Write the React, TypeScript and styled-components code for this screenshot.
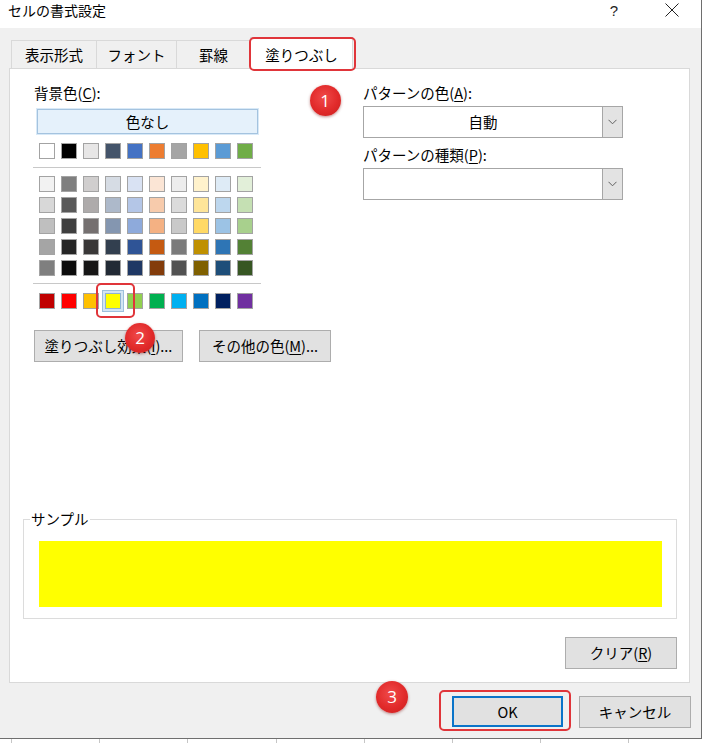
import React from 'react';
import styled, { createGlobalStyle } from 'styled-components';

const FONT = `"Noto Sans CJK JP", "Noto Sans", sans-serif`;

const GlobalStyle = createGlobalStyle`
  html, body { margin: 0; padding: 0; background: #fff; }
  body { font-family: ${FONT}; color: #000; }
  * { box-sizing: border-box; }
`;

const Page = styled.div`
  width: 703px;
  height: 743px;
  overflow: hidden;
  background: #fff;
  display: flex;
  flex-direction: column;
`;

const Window = styled.div`
  position: relative;
  width: 702px;
  height: 739px;
  flex: none;
  border-right: 1px solid #6e6e6e;
  border-bottom: 1px solid #6e6e6e;
  background: #f0f0f0;
  display: flex;
  flex-direction: column;
`;

const TitleBar = styled.div`
  height: 28px;
  flex: none;
  background: #fff;
  display: flex;
  align-items: flex-start;
`;

const Title = styled.div`
  flex: 1;
  padding: 0 0 0 8px;
  font-size: 14px;
  line-height: 20px;
`;

const CaptionButton = styled.div`
  width: 58px;
  height: 20px;
  display: flex;
  align-items: center;
  justify-content: center;
  font-family: "Liberation Sans", sans-serif;
  font-size: 15px;
  color: #222;
`;

const Body = styled.div`
  flex: 1;
  display: flex;
  flex-direction: column;
  padding: 8px 11px 0 9px;
`;

const TabRow = styled.div`
  height: 32px;
  flex: none;
  display: flex;
  align-items: flex-end;
  padding-left: 2px;
`;

const Tab = styled.div<{ $w: number; $active?: boolean }>`
  position: relative;
  width: ${(p) => p.$w}px;
  height: ${(p) => (p.$active ? 32 : 28)}px;
  margin-right: -1px;
  margin-bottom: ${(p) => (p.$active ? -1 : 0)}px;
  z-index: ${(p) => (p.$active ? 2 : 1)};
  padding-top: ${(p) => (p.$active ? 7 : 4)}px;
  background: ${(p) => (p.$active ? '#fff' : '#f0f0f0')};
  border: 1px solid #d9d9d9;
  border-bottom: none;
  text-align: center;
  font-size: 14.5px;
  line-height: 20px;
`;

const RedFrame = styled.div<{ $t: number; $l: number; $r: number; $b: number }>`
  position: absolute;
  top: ${(p) => p.$t}px;
  left: ${(p) => p.$l}px;
  right: ${(p) => p.$r}px;
  bottom: ${(p) => p.$b}px;
  border: 2px solid #e0353a;
  border-radius: 5px;
  pointer-events: none;
  z-index: 5;
`;

const Panel = styled.div`
  flex: 1;
  background: #fff;
  border: 1px solid #d9d9d9;
  display: flex;
  flex-direction: column;
  padding: 14px 12px 13px 13px;
`;

const Columns = styled.div`
  display: grid;
  grid-template-columns: 329px 260px;
  padding-left: 11px;
`;

const Column = styled.div`
  display: flex;
  flex-direction: column;
  align-items: flex-start;
`;

const Label = styled.div<{ $mt?: number }>`
  font-size: 14.5px;
  line-height: 20px;
  margin-top: ${(p) => p.$mt ?? 0}px;
`;

const NoColorButton = styled.div`
  margin: 6px 0 0 3px;
  width: 221px;
  height: 25px;
  background: #e5f1fb;
  border: 1px solid #a4c3df;
  outline: 1px solid #d8e9f7;
  display: flex;
  align-items: center;
  justify-content: center;
  font-size: 14.5px;
  line-height: 20px;
`;

const SwatchGrid = styled.div<{ $mt: number }>`
  display: grid;
  grid-template-columns: repeat(10, 16px);
  grid-auto-rows: 16px;
  column-gap: 6px;
  row-gap: 5px;
  margin: ${(p) => p.$mt}px 0 0 5px;
`;

const Swatch = styled.div<{ $c: string; $sel?: boolean }>`
  position: relative;
  width: 16px;
  height: 16px;
  background: ${(p) => p.$c};
  border: 1px solid ${(p) => (p.$sel ? '#8fb3d3' : '#a3a3a3')};
  box-shadow: ${(p) => (p.$sel ? '0 0 0 2px #d3e5f4, 0 0 0 3px #9dbfdc' : 'none')};
`;

const Separator = styled.div<{ $mt: number }>`
  width: 228px;
  height: 1px;
  margin: ${(p) => p.$mt}px 0 0 -1px;
  background: #c8c8c8;
`;

const ButtonRow = styled.div`
  display: flex;
  gap: 16px;
  margin-top: 21px;
`;

const PushButton = styled.div<{ $w: number; $default?: boolean }>`
  position: relative;
  width: ${(p) => p.$w}px;
  height: ${(p) => (p.$default ? 31 : 32)}px;
  background: #e1e1e1;
  border: ${(p) => (p.$default ? '2px solid #0a74c9' : '1px solid #adadad')};
  display: flex;
  align-items: center;
  justify-content: center;
  font-size: 14.5px;
  line-height: 20px;
  flex: none;
`;

const Select = styled.div`
  margin-top: 3px;
  width: 260px;
  height: 32px;
  border: 1px solid #a6a6a6;
  background: #fff;
  display: flex;
`;

const SelectValue = styled.div`
  flex: 1;
  display: flex;
  align-items: center;
  justify-content: center;
  font-size: 14.5px;
  line-height: 20px;
`;

const SelectArrow = styled.div`
  width: 20px;
  background: #e3e3e3;
  border-left: 1px solid #a6a6a6;
  display: flex;
  align-items: center;
  justify-content: center;
`;

const SampleBox = styled.div`
  position: relative;
  margin-top: auto;
  height: 100px;
  border: 1px solid #dcdcdc;
  padding: 21px 14px 11px 15px;
`;

const SampleCaption = styled.div`
  position: absolute;
  top: -11px;
  left: 6px;
  padding: 0 1px;
  background: #fff;
  font-size: 14.5px;
  line-height: 20px;
`;

const SampleFill = styled.div<{ $c: string }>`
  height: 66px;
  background: ${(p) => p.$c};
`;

const ClearRow = styled.div`
  display: flex;
  justify-content: flex-end;
  margin-top: 18px;
`;

const Footer = styled.div`
  height: 55px;
  flex: none;
  display: flex;
  justify-content: flex-end;
  align-items: flex-start;
  gap: 16px;
  padding-top: 13px;
  margin-right: -1px;
`;

const Badge = styled.div<{ $x: number; $y: number; $d: number }>`
  position: absolute;
  left: ${(p) => p.$x - p.$d / 2}px;
  top: ${(p) => p.$y - p.$d / 2}px;
  width: ${(p) => p.$d}px;
  height: ${(p) => p.$d}px;
  border-radius: 50%;
  background: radial-gradient(circle at 45% 40%, #f04a4a 0%, #e12a2a 55%, #c81e1e 100%);
  box-shadow: 0 1px 3px rgba(120, 0, 0, 0.45);
  color: #fff;
  font-family: "Open Sans", "Liberation Sans", sans-serif;
  font-size: 17px;
  line-height: ${(p) => p.$d}px;
  text-align: center;
  z-index: 10;
`;

const Sheet = styled.div`
  flex: 1;
  display: flex;
  background: #fff;
`;

const SheetCell = styled.div<{ $w: number }>`
  width: ${(p) => p.$w}px;
  flex: none;
  border-right: 1px solid #c6c6c6;
`;

const Mn = styled.span`
  text-decoration: underline;
  text-underline-offset: 2px;
`;

const THEME_TOP = ['#FFFFFF', '#000000', '#E7E6E6', '#44546A', '#4472C4', '#ED7D31', '#A5A5A5', '#FFC000', '#5B9BD5', '#70AD47'];
const THEME_SHADES = [
  ['#F2F2F2', '#7F7F7F', '#D0CECE', '#D6DCE4', '#D9E2F3', '#FBE5D5', '#EDEDED', '#FFF2CC', '#DEEBF6', '#E2EFD9'],
  ['#D8D8D8', '#595959', '#AEABAB', '#ADB9CA', '#B4C6E7', '#F7CBAC', '#DBDBDB', '#FEE599', '#BDD7EE', '#C5E0B3'],
  ['#BFBFBF', '#3F3F3F', '#757070', '#8496B0', '#8EAADB', '#F4B183', '#C9C9C9', '#FFD965', '#9CC3E5', '#A8D08D'],
  ['#A5A5A5', '#262626', '#3A3838', '#323F4F', '#2F5496', '#C55A11', '#7B7B7B', '#BF9000', '#2E75B5', '#538135'],
  ['#7F7F7F', '#0C0C0C', '#171616', '#222A35', '#1F3864', '#833C0B', '#525252', '#7F6000', '#1E4E79', '#375623'],
];
const STANDARD = ['#C00000', '#FF0000', '#FFC000', '#FFFF00', '#92D050', '#00B050', '#00B0F0', '#0070C0', '#002060', '#7030A0'];

const Chevron = () => (
  <svg width="9" height="6" viewBox="0 0 9 6">
    <path d="M0.5 0.8 L4.5 4.8 L8.5 0.8" fill="none" stroke="#606060" strokeWidth="1" />
  </svg>
);

const CloseIcon = () => (
  <svg width="14" height="14" viewBox="0 0 14 14">
    <path d="M0.5 0.5 L13.5 13.5 M13.5 0.5 L0.5 13.5" stroke="#222" strokeWidth="1" />
  </svg>
);

const TABS = [
  { label: '表示形式', w: 86 },
  { label: 'フォント', w: 81 },
  { label: '罫線', w: 75 },
  { label: '塗りつぶし', w: 103, active: true },
];

export default function App() {
  return (
    <Page>
      <GlobalStyle />
      <Window>
        <TitleBar>
          <Title>セルの書式設定</Title>
          <CaptionButton>?</CaptionButton>
          <CaptionButton>
            <CloseIcon />
          </CaptionButton>
        </TitleBar>
        <Body>
          <TabRow>
            {TABS.map((t) => (
              <Tab key={t.label} $w={t.w} $active={t.active}>
                {t.label}
                {t.active && <RedFrame $t={-1} $l={-2} $r={-4} $b={-2} />}
              </Tab>
            ))}
          </TabRow>
          <Panel>
            <Columns>
              <Column>
                <Label>
                  背景色(<Mn>C</Mn>):
                </Label>
                <NoColorButton>色なし</NoColorButton>
                <SwatchGrid $mt={9}>
                  {THEME_TOP.map((c, i) => (
                    <Swatch key={i} $c={c} />
                  ))}
                </SwatchGrid>
                <Separator $mt={8} />
                <SwatchGrid $mt={8}>
                  {THEME_SHADES.flat().map((c, i) => (
                    <Swatch key={i} $c={c} />
                  ))}
                </SwatchGrid>
                <Separator $mt={7} />
                <SwatchGrid $mt={9}>
                  {STANDARD.map((c, i) => (
                    <Swatch key={i} $c={c} $sel={i === 3}>
                      {i === 3 && <RedFrame $t={-11} $l={-10} $r={-15} $b={-10} />}
                    </Swatch>
                  ))}
                </SwatchGrid>
                <ButtonRow>
                  <PushButton $w={149}>
                    塗りつぶし効果(<Mn>I</Mn>)...
                  </PushButton>
                  <PushButton $w={132}>
                    その他の色(<Mn>M</Mn>)...
                  </PushButton>
                </ButtonRow>
              </Column>
              <Column>
                <Label>
                  パターンの色(<Mn>A</Mn>):
                </Label>
                <Select>
                  <SelectValue>自動</SelectValue>
                  <SelectArrow>
                    <Chevron />
                  </SelectArrow>
                </Select>
                <Label $mt={7}>
                  パターンの種類(<Mn>P</Mn>):
                </Label>
                <Select>
                  <SelectValue />
                  <SelectArrow>
                    <Chevron />
                  </SelectArrow>
                </Select>
              </Column>
            </Columns>
            <SampleBox>
              <SampleCaption>サンプル</SampleCaption>
              <SampleFill $c="#FFFF00" />
            </SampleBox>
            <ClearRow>
              <PushButton $w={112}>
                クリア(<Mn>R</Mn>)
              </PushButton>
            </ClearRow>
          </Panel>
          <Footer>
            <PushButton $w={111} $default>
              OK
              <RedFrame $t={-8} $l={-15} $r={-10} $b={-6} />
            </PushButton>
            <PushButton $w={112}>キャンセル</PushButton>
          </Footer>
        </Body>
        <Badge $x={325} $y={100} $d={31}>1</Badge>
        <Badge $x={140} $y={338} $d={30}>2</Badge>
        <Badge $x={392} $y={697} $d={32}>3</Badge>
      </Window>
      <Sheet>
        <SheetCell $w={12} />
        <SheetCell $w={88} />
        <SheetCell $w={88} />
        <SheetCell $w={89} />
        <SheetCell $w={88} />
        <SheetCell $w={88} />
        <SheetCell $w={88} />
        <SheetCell $w={88} />
      </Sheet>
    </Page>
  );
}
